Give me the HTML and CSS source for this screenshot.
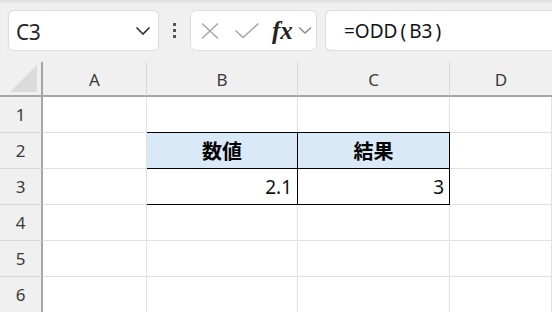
FILE: index.html
```html
<!DOCTYPE html>
<html lang="ja">
<head>
    <meta charset="UTF-8">
    <title>ODD</title>
    <link rel="stylesheet" href="styles.css">
</head>
<body>
    <div class="toolbar">
        <div class="namebox">
            <span class="name">C3</span>
            <svg class="chev" width="16" height="10" viewBox="0 0 16 10"><path d="M1.5 1.5 L8 8 L14.5 1.5" fill="none" stroke="#333" stroke-width="1.6"/></svg>
        </div>
        <div class="dots"><i></i><i></i><i></i></div>
        <div class="fxbox">
            <svg width="20" height="18" viewBox="0 0 20 18"><path d="M2 1.5 L18 16.5 M18 1.5 L2 16.5" fill="none" stroke="#a6a6a6" stroke-width="1.5"/></svg>
            <svg width="26" height="18" viewBox="0 0 26 18"><path d="M1.5 8.5 L9 15.5 L24.5 1.5" fill="none" stroke="#a6a6a6" stroke-width="1.5"/></svg>
            <span class="fx">fx</span>
            <svg class="small-chev" width="14" height="9" viewBox="0 0 14 9"><path d="M1 1.5 L7 7 L13 1.5" fill="none" stroke="#8a8a8a" stroke-width="1.4"/></svg>
        </div>
        <div class="formula">=ODD<span class="paren">(</span>B3<span class="paren">)</span></div>
    </div>

    <div class="sheet">
        <div class="corner"><span class="tri"></span></div>
        <div class="colhead">A</div>
        <div class="colhead">B</div>
        <div class="colhead">C</div>
        <div class="colhead last">D</div>

        <div class="rowhead">1</div>
        <div class="cell"></div><div class="cell"></div><div class="cell"></div><div class="cell"></div>

        <div class="rowhead">2</div>
        <div class="cell"></div>
        <div class="cell th">数値</div>
        <div class="cell th">結果</div>
        <div class="cell"></div>

        <div class="rowhead">3</div>
        <div class="cell"></div>
        <div class="cell td">2.1</div>
        <div class="cell td">3</div>
        <div class="cell"></div>

        <div class="rowhead">4</div>
        <div class="cell"></div><div class="cell"></div><div class="cell"></div><div class="cell"></div>

        <div class="rowhead">5</div>
        <div class="cell"></div><div class="cell"></div><div class="cell"></div><div class="cell"></div>

        <div class="rowhead">6</div>
        <div class="cell"></div><div class="cell"></div><div class="cell"></div><div class="cell"></div>
    </div>
</body>
</html>
```

FILE: styles.css
```css
body {
    margin: 0;
    width: 552px;
    height: 312px;
    overflow: hidden;
    background: #ffffff;
    font-family: "Noto Sans", "Noto Sans CJK JP", sans-serif;
    color: #222;
}
.toolbar {
    height: 62px;
    background: #f0f0f0;
    box-shadow: inset 0 3px 3px -1px rgba(0, 0, 0, 0.08);
    display: flex;
    align-items: flex-start;
    padding: 10px 0 0 8px;
    box-sizing: border-box;
    white-space: nowrap;
}
.namebox {
    width: 151px;
    height: 41px;
    background: #fff;
    border: 1px solid #dcdcdc;
    border-radius: 6px;
    box-sizing: border-box;
    display: flex;
    align-items: center;
    justify-content: space-between;
    padding: 0 7px 0 7px;
}
.name {
    font-size: 21px;
    color: #262626;
    letter-spacing: -0.5px;
    padding-top: 2px;
}
.dots {
    width: 31px;
    height: 41px;
    display: flex;
    flex-direction: column;
    align-items: center;
    justify-content: center;
    gap: 3px;
}
.dots i {
    width: 3px;
    height: 3px;
    background: #555;
    display: block;
}
.fxbox {
    width: 127px;
    height: 41px;
    background: #fff;
    border: 1px solid #dcdcdc;
    border-radius: 6px;
    box-sizing: border-box;
    display: flex;
    align-items: center;
    padding-left: 9px;
}
.fxbox svg:nth-child(2) {
    margin-left: 14px;
}
.fx {
    font-family: "Liberation Serif", serif;
    font-style: italic;
    font-weight: bold;
    font-size: 25px;
    color: #222;
    margin-left: 12px;
}
.small-chev {
    margin-left: 5px;
}
.formula {
    margin-left: 8px;
    flex: 1;
    height: 41px;
    background: #fff;
    border: 1px solid #dcdcdc;
    border-right: none;
    border-radius: 6px 0 0 6px;
    box-sizing: border-box;
    padding: 7px 0 0 18px;
    font-family: "Noto Sans", sans-serif;
    font-size: 19px;
    color: #111;
}
.paren {
    margin: 0 3px;
}
.sheet {
    display: grid;
    grid-template-columns: 43px 104px 151px 152px 1fr;
    grid-template-rows: 35px repeat(6, 36px);
}
.corner {
    background: #f0f0f0;
    border-right: 2px solid #a5a5a5;
    border-bottom: 2px solid #a5a5a5;
    box-sizing: border-box;
    position: relative;
}
.tri {
    position: absolute;
    right: 4px;
    bottom: 3px;
    width: 0;
    height: 0;
    border-left: 27px solid transparent;
    border-bottom: 27px solid #dbdbdb;
}
.colhead {
    background: #f0f0f0;
    border-right: 1px solid #d8d8d8;
    border-bottom: 2px solid #a5a5a5;
    box-sizing: border-box;
    display: flex;
    align-items: center;
    justify-content: center;
    font-size: 17px;
    color: #3a3a3a;
    padding-top: 2px;
}
.colhead.last {
    border-right: none;
}
.rowhead {
    background: #f0f0f0;
    border-right: 2px solid #a5a5a5;
    border-bottom: 1px solid #d8d8d8;
    box-sizing: border-box;
    display: flex;
    align-items: center;
    justify-content: center;
    font-size: 17px;
    color: #3a3a3a;
}
.cell {
    border-right: 1px solid #e1e1e1;
    border-bottom: 1px solid #e1e1e1;
    box-sizing: border-box;
    display: flex;
    align-items: center;
    font-size: 19px;
    color: #111;
}
.th {
    background: #dae9f8;
    justify-content: center;
    font-weight: bold;
    font-size: 20px;
    color: #000;
    font-family: "Noto Sans CJK JP", sans-serif;
    border: 1px solid #000;
    border-left: none;
    margin-top: -1px;
    height: 37px;
}
.td {
    justify-content: flex-end;
    padding-right: 5px;
    border-right: 1px solid #000;
    border-bottom: 1px solid #000;
}
.sheet .th:nth-child(12),
.sheet .td:nth-child(17) {
    border-left: 1px solid #000;
    margin-left: -1px;
}
```
